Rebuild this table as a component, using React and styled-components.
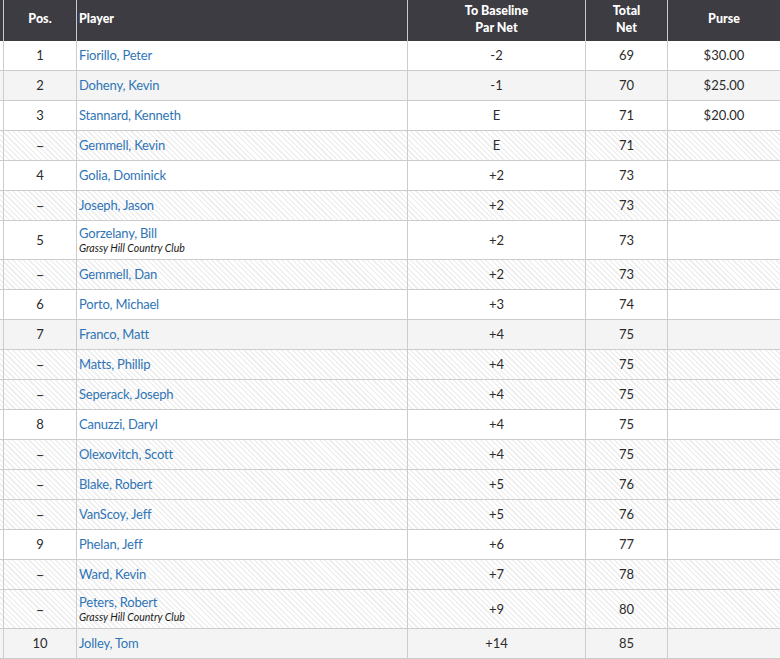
import React from "react";
import styled, { createGlobalStyle, css } from "styled-components";

const Global = createGlobalStyle`
  html, body { margin: 0; padding: 0; background: #fff; }
  body { font-family: "Lato", "Open Sans", sans-serif; }
`;

const COLS = "4px 73px 331px 178px 82px 1fr";

const Table = styled.div`
  width: 780px;
  overflow: hidden;
`;

const HeadRow = styled.div`
  display: grid;
  grid-template-columns: ${COLS};
  height: 41px;
  background: #3d3c42;
`;

const HeadCell = styled.div`
  display: flex;
  align-items: center;
  justify-content: ${(p) => (p.$left ? "flex-start" : "center")};
  padding-left: ${(p) => (p.$left ? "2px" : "0")};
  padding-bottom: 4px;
  text-align: center;
  border-right: 1px solid #c9c9c9;
  color: #fff;
  font-weight: 900;
  font-size: 12.5px;
  line-height: 17px;
  &:last-child { border-right: none; }
`;

const stripe = css`
  background: repeating-linear-gradient(
    45deg,
    #ffffff 0px,
    #ffffff 2.2px,
    #f0f0f0 2.2px,
    #f0f0f0 3.8px
  );
`;

const Row = styled.div`
  display: grid;
  grid-template-columns: ${COLS};
  height: ${(p) => (p.$tall ? "38px" : "29px")};
  border-bottom: 1px solid #cccccc;
  background: ${(p) => (p.$shade ? "#f4f4f4" : "#ffffff")};
  ${(p) => p.$tie && stripe}
`;

const Cell = styled.div`
  display: flex;
  flex-direction: column;
  justify-content: center;
  align-items: ${(p) => (p.$left ? "flex-start" : "center")};
  padding-left: ${(p) => (p.$left ? "2px" : "0")};
  padding-bottom: 1px;
  border-right: 1px solid #cccccc;
  font-size: 13px;
  color: #2b2b2b;
  &:last-child { border-right: none; }
`;

const Dash = styled.span`
  font-size: 15px;
  line-height: 16px;
  color: #333;
`;

const Name = styled.span`
  color: #2f74b5;
  font-size: 13px;
  letter-spacing: -0.2px;
  line-height: 16px;
`;

const Club = styled.span`
  font-style: italic;
  font-size: 10.5px;
  line-height: 14px;
  color: #1a1a1a;
`;

const data = [
  ["1", "Fiorillo, Peter", "-2", "69", "$30.00"],
  ["2", "Doheny, Kevin", "-1", "70", "$25.00"],
  ["3", "Stannard, Kenneth", "E", "71", "$20.00"],
  ["--", "Gemmell, Kevin", "E", "71", ""],
  ["4", "Golia, Dominick", "+2", "73", ""],
  ["--", "Joseph, Jason", "+2", "73", ""],
  ["5", "Gorzelany, Bill", "+2", "73", "", "Grassy Hill Country Club"],
  ["--", "Gemmell, Dan", "+2", "73", ""],
  ["6", "Porto, Michael", "+3", "74", ""],
  ["7", "Franco, Matt", "+4", "75", ""],
  ["--", "Matts, Phillip", "+4", "75", ""],
  ["--", "Seperack, Joseph", "+4", "75", ""],
  ["8", "Canuzzi, Daryl", "+4", "75", ""],
  ["--", "Olexovitch, Scott", "+4", "75", ""],
  ["--", "Blake, Robert", "+5", "76", ""],
  ["--", "VanScoy, Jeff", "+5", "76", ""],
  ["9", "Phelan, Jeff", "+6", "77", ""],
  ["--", "Ward, Kevin", "+7", "78", ""],
  ["--", "Peters, Robert", "+9", "80", "", "Grassy Hill Country Club"],
  ["10", "Jolley, Tom", "+14", "85", ""],
];

export default function App() {
  return (
    <>
      <Global />
      <Table>
        <HeadRow>
          <HeadCell />
          <HeadCell>Pos.</HeadCell>
          <HeadCell $left>Player</HeadCell>
          <HeadCell>To Baseline<br />Par Net</HeadCell>
          <HeadCell>Total<br />Net</HeadCell>
          <HeadCell>Purse</HeadCell>
        </HeadRow>
        {data.map((r, i) => {
          const tie = r[0] === "--";
          return (
            <Row key={i} $tie={tie} $shade={!tie && i % 2 === 1} $tall={!!r[5]}>
              <Cell />
              <Cell>{tie ? <Dash>–</Dash> : r[0]}</Cell>
              <Cell $left>
                <Name>{r[1]}</Name>
                {r[5] && <Club>{r[5]}</Club>}
              </Cell>
              <Cell>{r[2]}</Cell>
              <Cell>{r[3]}</Cell>
              <Cell>{r[4]}</Cell>
            </Row>
          );
        })}
      </Table>
    </>
  );
}
